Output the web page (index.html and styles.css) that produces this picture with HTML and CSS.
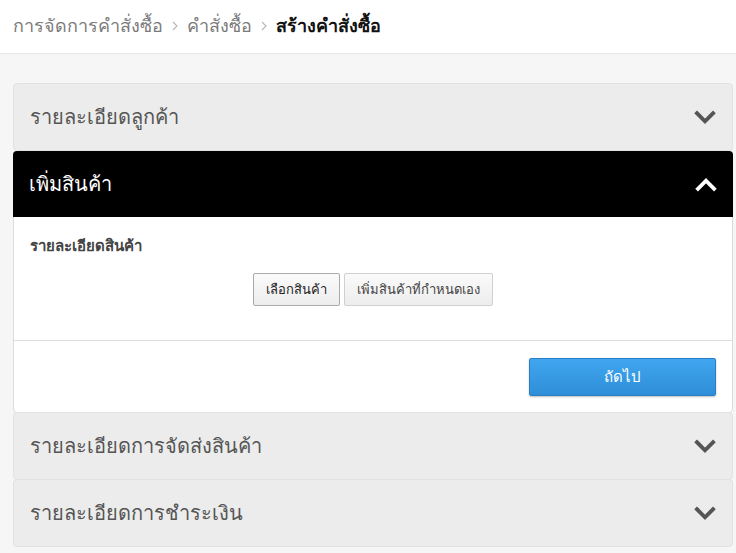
FILE: index.html
```html
<!DOCTYPE html>
<html lang="th">
<head>
    <meta charset="UTF-8">
    <meta name="viewport" content="width=device-width, initial-scale=1.0">
    <title>สร้างคำสั่งซื้อ</title>
    <link rel="stylesheet" href="styles.css">
</head>
<body>
    <div class="topbar">
        <span class="crumb">การจัดการคำสั่งซื้อ</span>
        <svg class="sep" viewBox="0 0 6 10"><path d="M1 1 L5 5 L1 9"/></svg>
        <span class="crumb">คำสั่งซื้อ</span>
        <svg class="sep" viewBox="0 0 6 10"><path d="M1 1 L5 5 L1 9"/></svg>
        <span class="crumb current">สร้างคำสั่งซื้อ</span>
    </div>

    <div class="content">
        <div class="panel">
            <div class="panel-head">
                <span>รายละเอียดลูกค้า</span>
                <svg class="chev" viewBox="0 0 20 14"><path d="M2.5 3 L10 10.5 L17.5 3"/></svg>
            </div>
        </div>

        <div class="panel open">
            <div class="panel-head">
                <span>เพิ่มสินค้า</span>
                <svg class="chev" viewBox="0 0 20 14"><path d="M2.5 11 L10 3.5 L17.5 11"/></svg>
            </div>
            <div class="panel-body">
                <div class="section-title">รายละเอียดสินค้า</div>
                <div class="btn-row">
                    <button class="btn active">เลือกสินค้า</button>
                    <button class="btn">เพิ่มสินค้าที่กำหนดเอง</button>
                </div>
            </div>
            <div class="panel-foot">
                <button class="btn-next">ถัดไป</button>
            </div>
        </div>

        <div class="panel">
            <div class="panel-head">
                <span>รายละเอียดการจัดส่งสินค้า</span>
                <svg class="chev" viewBox="0 0 20 14"><path d="M2.5 3 L10 10.5 L17.5 3"/></svg>
            </div>
        </div>

        <div class="panel">
            <div class="panel-head">
                <span>รายละเอียดการชำระเงิน</span>
                <svg class="chev" viewBox="0 0 20 14"><path d="M2.5 3 L10 10.5 L17.5 3"/></svg>
            </div>
        </div>
    </div>
</body>
</html>
```

FILE: styles.css
```css
body {
    margin: 0;
    font-family: "Liberation Sans", Arial, sans-serif;
    background: #f6f6f6;
    color: #333;
}
.topbar {
    height: 51px;
    background: #fff;
    border-bottom: 1px solid #e6e6e6;
    display: flex;
    align-items: center;
    gap: 9px;
    padding: 0 0 2px 13px;
    font-size: 18px;
    color: #7a7a7a;
}
.topbar .sep {
    width: 6px;
    height: 10px;
    fill: none;
    stroke: #b5b5b5;
    stroke-width: 1.1;
}
.topbar .current {
    color: #111;
    font-weight: bold;
}
.content {
    padding: 29px 3px 0 13px;
}
.panel {
    border: 1px solid #e2e2e2;
    border-radius: 4px;
    background: #ececec;
}
.open + .panel,
.panel + .panel + .panel + .panel {
    margin-top: -1px;
}
.panel-head {
    height: 66px;
    display: flex;
    align-items: center;
    justify-content: space-between;
    padding: 0 16px 0 16px;
    font-size: 20px;
    color: #555;
}
.chev {
    width: 22px;
    height: 15px;
    fill: none;
    stroke: #555;
    stroke-width: 3.6;
    stroke-linecap: square;
}
.panel.open {
    border-color: #dcdcdc;
    background: #fff;
}
.panel.open .panel-head {
    background: #000;
    color: #fff;
    margin: -1px -1px 0;
    border-radius: 4px 4px 0 0;
}
.panel.open .chev {
    stroke: #fff;
}
.panel-body {
    padding: 17px 16px 34px;
    border-bottom: 1px solid #dedede;
}
.section-title {
    font-size: 15px;
    font-weight: bold;
    color: #444;
}
.btn-row {
    display: flex;
    justify-content: center;
    gap: 4px;
    margin-top: 15px;
}
.btn {
    font-family: inherit;
    font-size: 13px;
    color: #444;
    height: 33px;
    padding: 0 12px;
    border: 1px solid #d0d0d0;
    border-radius: 2px;
    background: linear-gradient(#fafafa, #ededed);
}
.btn.active {
    border-color: #aaa;
    color: #222;
}
.panel-foot {
    display: flex;
    justify-content: flex-end;
    padding: 17px 16px 16px;
}
.btn-next {
    width: 187px;
    height: 38px;
    font-family: inherit;
    font-size: 15px;
    color: #fff;
    border: 1px solid #2a7fc4;
    border-radius: 2px;
    background: linear-gradient(#40a6ef, #2f8ed8);
    box-shadow: 0 1px 2px rgba(0, 0, 0, 0.25);
}
```
